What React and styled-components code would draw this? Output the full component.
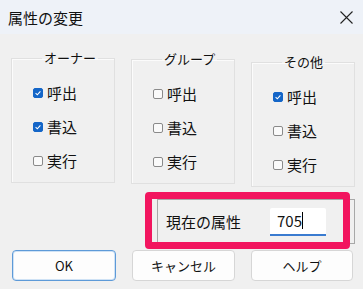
import React from 'react';
import styled, { createGlobalStyle } from 'styled-components';

const Global = createGlobalStyle`
body {
  margin: 0;
  background: #f0f0f0;
  font-family: "Noto Sans CJK JP", "Noto Sans", sans-serif;
  color: #111;
}
`

const Dialog = styled.div`
width: 363px;
height: 289px;
background: #f0f0f0;
overflow: hidden;
`

const TitleBar = styled.div`
height: 34px;
background: #eef2f8;
display: flex;
align-items: center;
justify-content: space-between;
padding: 0 9px 0 8px;
font-size: 15px;
`

const Groups = styled.div`
display: flex;
align-items: flex-start;
gap: 16px;
padding-left: 11px;
margin-top: 16px;
`

const Group = styled.fieldset`
width: 104px;
box-sizing: border-box;
margin: ${p => p.$drop}px 0 0;
padding: 10px 0 4px 21px;
border: 1px solid #e0e0e0;
box-shadow: inset 1px 1px 0 #fbfbfb;
legend {
  margin-left: 9px;
  padding: 0 2px;
  font-size: 13px;
  line-height: 16px;
}
`

const Row = styled.label`
height: 34px;
display: flex;
align-items: center;
gap: 4px;
font-size: 15px;
line-height: 18px;
`

const Box = styled.span`
width: 10px;
height: 10px;
box-sizing: border-box;
border-radius: 2px;
display: flex;
align-items: center;
justify-content: center;
background: ${p => (p.$on ? '#1466c8' : '#fafafa')};
border: 1px solid ${p => (p.$on ? '#1466c8' : '#8a8a8a')};
`

const AttrWrap = styled.div`
display: flex;
justify-content: flex-end;
padding-right: 8px;
margin-top: 12px;
`

const AttrFrame = styled.div`
position: relative;
width: 198px;
height: 45px;
box-sizing: border-box;
border: 1px solid #a8a8a8;
display: flex;
align-items: center;
padding-left: 8px;
font-size: 15px;
`

const Value = styled.div`
margin-left: 29px;
width: 56px;
height: 28px;
box-sizing: border-box;
background: #fff;
border-bottom: 2px solid #3a7bd0;
border-radius: 2px 2px 0 0;
display: flex;
align-items: center;
padding-left: 7px;
font-size: 15px;
i {
  width: 1px;
  height: 17px;
  background: #000;
}
`

const Highlight = styled.div`
position: absolute;
left: -13px;
top: -8px;
width: 205px;
height: 57px;
box-sizing: border-box;
border: 7px solid #f2155f;
border-radius: 4px;
`

const Buttons = styled.div`
display: flex;
justify-content: space-between;
padding: 0 10px 0 12px;
margin-top: 6px;
`

const Button = styled.button`
width: ${p => p.$w}px;
height: 31px;
background: #fdfdfd;
border: 1px solid ${p => (p.$primary ? '#5d9ad8' : '#d6d6d6')};
box-shadow: ${p => (p.$primary ? 'inset 0 0 0 1px #cfe2f5' : 'none')};
border-radius: 4px;
font-family: "Noto Sans CJK JP", "Noto Sans", sans-serif;
font-size: 13px;
color: #111;
padding: 0;
`

const Check = ({ on, children }) => (
  <Row>
    <Box $on={on}>
      {on && (
        <svg width="8" height="8" viewBox="0 0 8 8">
          <path d="M1.6 4.2 L3.3 5.8 L6.4 2.4" fill="none" stroke="#fff" strokeWidth="1.1" />
        </svg>
      )}
    </Box>
    {children}
  </Row>
)

const groups = [
  { name: 'オーナー', drop: 0, v: [true, true, false] },
  { name: 'グループ', drop: 1, v: [false, false, false] },
  { name: 'その他', drop: 4, v: [true, false, false] },
]

const App = () => {
  return (
    <Dialog>
      <Global />
      <TitleBar>
        <span>属性の変更</span>
        <svg width="15" height="15" viewBox="0 0 15 15">
          <path d="M1.5 1.5 L13.5 13.5 M13.5 1.5 L1.5 13.5" stroke="#222" strokeWidth="1.1" />
        </svg>
      </TitleBar>
      <Groups>
        {groups.map(g => (
          <Group key={g.name} $drop={g.drop}>
            <legend>{g.name}</legend>
            <Check on={g.v[0]}>呼出</Check>
            <Check on={g.v[1]}>書込</Check>
            <Check on={g.v[2]}>実行</Check>
          </Group>
        ))}
      </Groups>
      <AttrWrap>
        <AttrFrame>
          <span>現在の属性</span>
          <Value>705<i /></Value>
          <Highlight />
        </AttrFrame>
      </AttrWrap>
      <Buttons>
        <Button $w={104} $primary>OK</Button>
        <Button $w={103}>キャンセル</Button>
        <Button $w={102}>ヘルプ</Button>
      </Buttons>
    </Dialog>
  )
}

export default App
